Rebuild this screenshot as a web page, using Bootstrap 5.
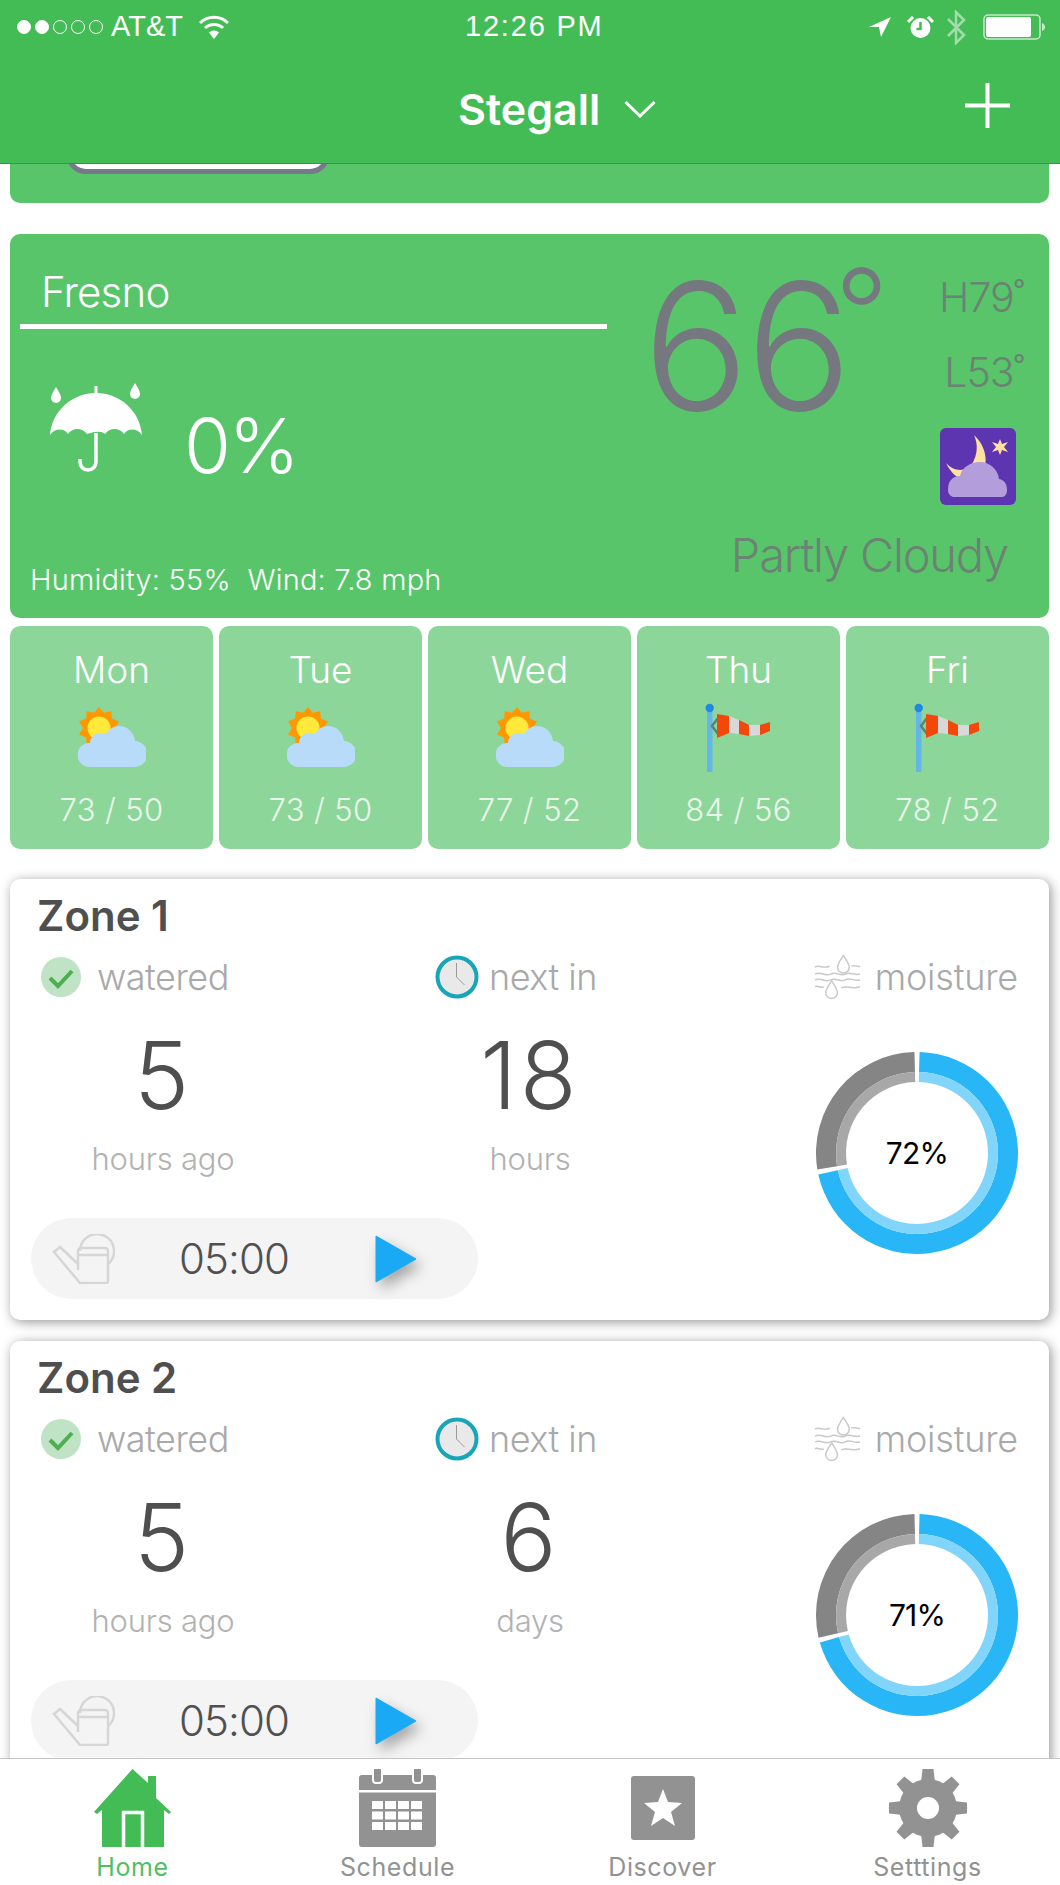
<!DOCTYPE html>
<html lang="en">
<head>
  <meta charset="UTF-8" />
  <title>Stegall</title>
  <link href="https://cdn.jsdelivr.net/npm/bootstrap@5.3.0/dist/css/bootstrap.min.css" rel="stylesheet">
  <style>
    body { margin: 0; background: #fff; font-family: Inter, "Liberation Sans", sans-serif; }
    .phone { width: 1060px; height: 1885px; overflow: hidden; }

    /* header */
    .top-bar { height: 164px; background: #43bc55; border-bottom: 1px solid #2f9a41; color: #fff; flex: none; }
    .status-row { height: 54px; font-family: "Liberation Sans", sans-serif; font-size: 29px; }
    .sig-dot { width: 14px; height: 14px; border-radius: 50%; border: 1.5px solid #fff; margin-right: 4px; }
    .sig-dot.on { background: #fff; }
    .status-left { width: 465px; padding-left: 17px; }
    .status-time { letter-spacing: 1.8px; }
    .bt-ico { margin-left: 12px; }
    .nav-row { height: 109px; padding: 0 50px 0 458px; }
    .stegall { color: #fff; font: 600 43px/50px Inter, sans-serif; }
    .stegall:hover { color: #fff; }
    .plus-ico { margin-top: -7px; }

    /* scrolling part */
    .scroller { padding: 0 11px 0 10px; overflow: hidden; }
    .peek-card { height: 39px; background: #58c56a; border-radius: 0 0 10px 10px; margin-bottom: 31px; padding-left: 56px; }
    .peek-pill { width: 264px; height: 40px; margin-top: -30px; background: #fff; border: 5px solid #77798a; border-radius: 32px; }

    .weather-card { height: 384px; background: #58c56a; border-radius: 10px; margin-bottom: 8px; }
    .weather-left { width: 587px; margin-left: 10px; padding-top: 33px; color: #fff; font-weight: 300; }
    .city { font-size: 42px; line-height: 50px; padding-left: 21px; letter-spacing: -.8px; }
    .city-line { height: 5px; background: #fff; margin-top: 7px; }
    .rain-row { height: 89px; margin-top: 54px; padding-left: 30px; }
    .rain-num { font-size: 76px; line-height: 76px; margin: 24px 0 0 42px; letter-spacing: -2.5px; }
    .humid { font-size: 29px; line-height: 36px; margin-top: 90px; padding-left: 10px; letter-spacing: .2px; }
    .weather-right { margin-left: 45px; padding: 23px 25px 0 0; flex: 1; color: #6b8373; font-weight: 300; }
    .big-temp { font-size: 176px; line-height: 178px; color: #75797f; letter-spacing: -3px; margin-left: -9px; }
    .last-digit { letter-spacing: -17px; }
    .big-deg { font-size: 118px; line-height: 0; vertical-align: 56px; letter-spacing: 0; }
    .hi-lo { padding-top: 18px; font-size: 41px; line-height: 44px; letter-spacing: -1px; }
    .hi-lo div + div { margin-top: 31px; }
    .moon-icon { width: 76px; height: 77px; margin: 34px 8px 0 0; }
    .sky-text { font-size: 47px; line-height: 56px; margin: 22px 16px 0 0; letter-spacing: -1.2px; }

    .day-row { margin-bottom: 30px; gap: 6px; }
    .day-tile { flex: 1 1 0; height: 223px; background: #8dd69a; border-radius: 10px; padding-top: 22px; color: #fff; font-weight: 300; }
    .day-name { font-size: 37px; line-height: 44px; }
    .day-icon { display: block; width: 68px; height: 70px; margin: 11px auto 19px; }
    .day-temp { font-size: 31px; line-height: 36px; letter-spacing: .4px; color: #e9f7eb; }

    /* zones */
    .zone-box { height: 441px; background: #fff; border-radius: 10px; box-shadow: 2px 2px 12px rgba(0,0,0,.42); margin-bottom: 21px; }
    .zone-main { width: 734px; padding-top: 12px; }
    .zone-title { font-size: 42px; line-height: 50px; font-weight: 600; color: #4f4f4f; padding-left: 27px; }
    .zone-cols { margin-top: 12px; }
    .zone-col-a { width: 306px; }
    .zone-col-b { width: 428px; }
    .zone-label { height: 48px; font-size: 36px; font-weight: 300; color: #a9a9a9; letter-spacing: -.5px; }
    .zone-col-a .zone-label { padding-left: 30px; }
    .zone-col-b .zone-label { padding-left: 119px; }
    .zone-val { font-size: 93px; line-height: 90px; margin-top: 29px; color: #4f4f4f; font-weight: 350; letter-spacing: 3px; }
    .zone-sub { font-size: 31px; line-height: 40px; margin-top: 19px; color: #b2b2b2; font-weight: 300; letter-spacing: -.2px; }
    .timer-pill { width: 447px; height: 81px; margin: 39px 0 0 21px; background: #f4f4f4; border-radius: 41px; padding-left: 20px; }
    .timer-text { font-size: 42px; font-weight: 300; color: #505050; margin-left: 64px; width: 107px; letter-spacing: -.9px; }
    .play-icon { margin-left: 89px; filter: drop-shadow(5px 7px 7px rgba(0,0,0,.32)); }
    .zone-side { flex: 1; padding: 74px 31px 0 0; }
    .zone-side .zone-label { letter-spacing: -.2px; }
    .check-ico { margin-right: 15px; }
    .moist-ico { margin-right: 14px; }
    .clock-ico { margin-right: 10px; }
    .donut-wrap { position: relative; width: 202px; height: 202px; margin: 51px 0 0 auto; }
    .donut-num { position: absolute; inset: 0; font-size: 30px; color: #000; font-weight: 400; letter-spacing: -.8px; }

    /* tab bar */
    .tab-bar { height: 127px; flex: none; border-top: 1px solid #c4c4c4; background: #fff; position: relative; }
    .tab-link { padding: 10px 0 0; color: #929292; font-size: 25px; line-height: 30px; letter-spacing: .6px; }
    .tab-link.active-tab { color: #4fbf62; }
    .tab-link svg { display: block; margin: 0 auto 5px; }
  </style>
</head>
<body>

<div class="phone d-flex flex-column">

  <div class="top-bar">
    <div class="status-row d-flex align-items-center">
      <div class="status-left d-flex align-items-center">
        <span class="sig-dot on"></span><span class="sig-dot on"></span><span class="sig-dot"></span><span class="sig-dot"></span><span class="sig-dot"></span>
        <span class="ms-1">AT&amp;T</span>
        <svg class="ms-3" width="30" height="24" viewBox="0 0 30 24"><path d="M1 8a20 20 0 0 1 28 0" fill="none" stroke="#fff" stroke-width="3"/><path d="M6 13a13 13 0 0 1 18 0" fill="none" stroke="#fff" stroke-width="3"/><path d="M10 17.500a7 7 0 0 1 10 0L15 24z" fill="#fff"/></svg>
      </div>
      <span class="status-time">12:26 PM</span>
      <div class="ms-auto d-flex align-items-center">
        <svg width="22" height="20" viewBox="0 0 22 20"><path d="M22 0L0 10h10l2 10z" fill="#fff"/></svg>
        <svg class="ms-3" width="27" height="22" viewBox="0 0 27 22"><circle cx="13.500" cy="12" r="10" fill="#fff"/><path d="M13.500 6v7h-4" stroke="#43bc55" stroke-width="2.500" fill="none"/><path d="M1 6l5-5M26 6l-5-5" stroke="#fff" stroke-width="3"/></svg>
        <svg class="bt-ico" width="20" height="35" viewBox="0 0 20 35" opacity=".5"><path d="M2 9l16 16-8 8V2l8 8L2 26" fill="none" stroke="#fff" stroke-width="2.500"/></svg>
        <svg style="margin:0 14px 0 17px" width="63" height="26" viewBox="0 0 63 26"><rect x="1" y="1" width="56" height="24" rx="4" fill="none" stroke="#fff" stroke-opacity=".7" stroke-width="1.500"/><rect x="3" y="3" width="45" height="20" rx="2" fill="#fff"/><path d="M59 9c2 1 3 2 3 4s-1 3-3 4z" fill="#fff" fill-opacity=".7"/></svg>
      </div>
    </div>
    <div class="navbar nav-row flex-nowrap">
      <div class="navbar-brand stegall m-0 p-0">Stegall</div>
      <svg class="ms-4 me-auto" width="32" height="18" viewBox="0 0 32 18"><path d="M1.500 2L16 16 30.500 2" fill="none" stroke="#fff" stroke-width="3"/></svg>
      <svg class="plus-ico" width="45" height="45" viewBox="0 0 45 45"><path d="M22.500 0v45M0 22.500h45" stroke="#fff" stroke-width="4"/></svg>
    </div>
  </div>

  <div class="scroller flex-grow-1">
    <div class="peek-card d-flex"><div class="peek-pill"></div></div>

    <div class="weather-card d-flex">
      <div class="weather-left">
        <div class="city">Fresno</div>
        <div class="city-line"></div>
        <div class="rain-row d-flex align-items-start">
          <svg width="92" height="89" viewBox="0 0 92 89">
            <path d="M46 3v8" stroke="#fff" stroke-width="3"/>
            <path d="M6 4c3 5 5 8 5 11a5 5 0 0 1-10 0c0-3 2-6 5-11zM85 0c3 5 5 8 5 11a5 5 0 0 1-10 0c0-3 2-6 5-11z" fill="#fff"/>
            <path d="M0 52C2 28 22 10 46 10s44 18 46 42c-5-7-14-7-18-1-4-6-14-7-19 0-3-3-9-3-18 0-5-7-15-6-19 0-4-6-13-6-18 1z" fill="#fff"/>
            <path d="M46 50v29a8 8 0 0 1-16 0v-3" fill="none" stroke="#fff" stroke-width="3.500"/>
          </svg>
          <div class="rain-num">0%</div>
        </div>
        <div class="humid">Humidity: 55% &nbsp;Wind: 7.8 mph</div>
      </div>
      <div class="weather-right d-flex flex-column">
        <div class="d-flex justify-content-between">
          <div class="big-temp">6<span class="last-digit">6</span><span class="big-deg">°</span></div>
          <div class="hi-lo d-flex flex-column align-items-end">
            <div>H79˚</div>
            <div>L53˚</div>
            <svg class="moon-icon" viewBox="0 0 76 77">
              <rect width="76" height="77" rx="6" fill="#5e35b1"/>
              <path d="M34 7C46 18 50 36 40 48 30 58 14 52 6 35c8 9 20 9 26 1 6-10 6-20 2-29z" fill="#ffe0a3"/>
              <path d="M60 11l2 5 6-2-4 5 4 5-6-2-2 5-2-5-6 2 4-5-4-5 6 2z" fill="#ffe0a3"/>
              <path d="M13 69a8 8 0 0 1-5-8c0-7 4-13 12-13 2-9 11-14 20-14s18 7 19 17c6 1 8 6 8 11 0 4-2 7-5 7z" fill="#b39ddb"/>
            </svg>
          </div>
        </div>
        <div class="sky-text text-end">Partly Cloudy</div>
      </div>
    </div>

    <div id="days" class="day-row d-flex"></div>
    <div id="zones"></div>
  </div>

  <nav class="nav nav-justified tab-bar">
    <a class="nav-link tab-link active-tab" href="#">
      <svg width="78" height="78" viewBox="0 0 78 78"><path d="M38.500 0L54 14V7h8v22l15 14-2 2-5-4v37H8V41l-5 4-3-2z" fill="#43bc55"/><path d="M29.500 78V43.500h19V78" fill="none" stroke="#fff" stroke-width="3.500"/></svg>
      Home
    </a>
    <a class="nav-link tab-link" href="#">
      <svg width="78" height="78" viewBox="0 0 78 78"><rect y="6" width="77" height="72" rx="3" fill="#929292"/><rect y="21" width="77" height="2.500" fill="#fff"/><g fill="#929292" stroke="#fff" stroke-width="2"><rect x="14" y="-2" width="9" height="16" rx="3"/><rect x="54" y="-2" width="9" height="16" rx="3"/></g><path d="M13 36h51M13 46.500h51M13 57h51" stroke="#fff" stroke-width="8" stroke-dasharray="11 2"/></svg>
      Schedule
    </a>
    <a class="nav-link tab-link" href="#">
      <svg width="78" height="78" viewBox="0 0 78 78"><rect x="7" y="7" width="64" height="64" rx="3" fill="#929292"/><path d="M39 20l5 13 14 1-11 9 4 14-12-8-12 8 4-14-11-9 14-1z" fill="#fff"/></svg>
      Discover
    </a>
    <a class="nav-link tab-link" href="#">
      <svg width="78" height="78" viewBox="0 0 78 78" id="gear"><circle cx="39" cy="39" r="29" fill="#929292"/><circle cx="39" cy="39" r="11" fill="#fff"/></svg>
      Setttings
    </a>
  </nav>
</div>

<script src="https://cdn.jsdelivr.net/npm/bootstrap@5.3.0/dist/js/bootstrap.bundle.min.js"></script>
<script>
// spiky sun outline, 10 points round the sun centre
function sunPoints(cx, cy, outer, inner) {
  const pts = [];
  for (let i = 0; i < 20; i++) {
    const r = i % 2 ? inner : outer;
    const a = i / 20 * 2 * Math.PI;
    pts.push(`${(cx + r * Math.sin(a)).toFixed(1)},${(cy - r * Math.cos(a)).toFixed(1)}`);
  }
  return pts.join(" ");
}

const sunIcon = `<svg class="day-icon" viewBox="0 0 68 70">
  <polygon points="${sunPoints(21, 25, 21, 16)}" fill="#ff9800"/>
  <circle cx="21" cy="25" r="11.500" fill="#ffe93b"/>
  <path d="M12 64a12 12 0 0 1-1-24h1c0-6 5-10 10-10 2 0 4 1 6 1 2-5 8-8 13-8 8 0 15 6 16 15h0a13 13 0 0 1-1 26z" fill="#b7dbf9"/>
</svg>`;

const windIcon = `<svg class="day-icon" viewBox="0 0 68 70">
  <rect x="2" y="5" width="5.500" height="64" fill="#64b5e8"/>
  <circle cx="4.700" cy="5" r="4.200" fill="#1e88e5"/>
  <path d="M13 15l-6 8 6 8" fill="none" stroke="#5f8272" stroke-width="2.500"/>
  <path d="M12 11l12 2v17l-12 5z" fill="#f4470a"/>
  <path d="M24 13l10 4v14l-10-1z" fill="#d8d8d8"/>
  <path d="M34 17l10 5v11l-10-2z" fill="#f4470a"/>
  <path d="M44 22h11v10l-11 1z" fill="#d8d8d8"/>
  <path d="M55 22l10-3v9l-10 4z" fill="#f4470a"/>
</svg>`;

const forecast = [
  { day: "Mon", icon: sunIcon, temp: "73 / 50" },
  { day: "Tue", icon: sunIcon, temp: "73 / 50" },
  { day: "Wed", icon: sunIcon, temp: "77 / 52" },
  { day: "Thu", icon: windIcon, temp: "84 / 56" },
  { day: "Fri", icon: windIcon, temp: "78 / 52" }
];

document.getElementById("days").innerHTML = forecast.map(d => `
  <div class="day-tile text-center">
    <div class="day-name">${d.day}</div>
    ${d.icon}
    <div class="day-temp">${d.temp}</div>
  </div>`).join("");

// one ring (dark outer band + light inner band) for an arc in percent
function ringArc(from, to, outer, inner) {
  const pt = (r, p) => {
    const a = p / 100 * 2 * Math.PI;
    return `${(101 + r * Math.sin(a)).toFixed(2)} ${(101 - r * Math.cos(a)).toFixed(2)}`;
  };
  const big = to - from > 50 ? 1 : 0;
  return `M${pt(outer, from)}A${outer} ${outer} 0 ${big} 1 ${pt(outer, to)}L${pt(inner, to)}A${inner} ${inner} 0 ${big} 0 ${pt(inner, from)}Z`;
}

function donut(pct) {
  const gap = 0.4;
  return `<svg width="202" height="202" viewBox="0 0 202 202">
    <path d="${ringArc(gap, pct - gap, 101, 81)}" fill="#29b6f6"/>
    <path d="${ringArc(gap, pct - gap, 81, 71)}" fill="#81d4fa"/>
    <path d="${ringArc(pct + gap, 100 - gap, 101, 81)}" fill="#858585"/>
    <path d="${ringArc(pct + gap, 100 - gap, 81, 71)}" fill="#a8a8a8"/>
  </svg>`;
}

const canIcon = `<svg width="64" height="50" viewBox="0 0 64 50" fill="none" stroke="#d6d6d6" stroke-width="2.500">
  <path d="M29 17a17 17 0 1 1 28 13"/>
  <path d="M27 36V17a3 3 0 0 1 3-3h24a3 3 0 0 1 3 3v30a2 2 0 0 1-2 2H29L3 18l6-5 18 17"/>
  <path d="M27 21h30"/>
</svg>`;

const checkIcon = `<svg class="check-ico" width="42" height="42" viewBox="0 0 42 42"><circle cx="21" cy="21" r="20" fill="#bfe3c4"/><path d="M10 22l8 8 14-15" fill="none" stroke="#4caf50" stroke-width="4"/></svg>`;
const clockIcon = `<svg class="clock-ico" width="44" height="44" viewBox="0 0 44 44"><circle cx="22" cy="22" r="19.500" fill="#e9e9e9" stroke="#17a5b8" stroke-width="4"/><path d="M21.500 8v14l8 8" fill="none" stroke="#9a9a9a" stroke-width="1"/></svg>`;
const moistureIcon = `<svg class="moist-ico" width="47" height="48" viewBox="0 0 48 48" fill="none" stroke="#c9c9c9" stroke-width="1.500">
  <path d="M30 2c4 6 6 9 6 12a6 6 0 0 1-12 0c0-3 2-6 6-12zM18 28c4 6 6 9 6 12a6 6 0 0 1-12 0c0-3 2-6 6-12z"/>
  <path d="M1 14c4-3 8 2 15-1M38 13c3-2 6 1 9 0M1 21c6-3 10 3 16 0s10 3 15 0 9 2 15 0M1 27c6-3 10 3 16 0s10 3 15 0 9 2 15 0M1 34c3-2 6 2 9 0M28 35c6-3 10 2 19-1"/>
</svg>`;

const zoneData = [
  { name: "Zone 1", next: "18", unit: "hours", moisture: 72 },
  { name: "Zone 2", next: "6", unit: "days", moisture: 71 }
];

document.getElementById("zones").innerHTML = zoneData.map(z => `
  <div class="zone-box d-flex">
    <div class="zone-main">
      <div class="zone-title">${z.name}</div>
      <div class="zone-cols d-flex text-center">
        <div class="zone-col-a">
          <div class="zone-label d-flex align-items-center">${checkIcon}watered</div>
          <div class="zone-val">5</div>
          <div class="zone-sub">hours ago</div>
        </div>
        <div class="zone-col-b">
          <div class="zone-label d-flex align-items-center">${clockIcon}next in</div>
          <div class="zone-val">${z.next}</div>
          <div class="zone-sub">${z.unit}</div>
        </div>
      </div>
      <div class="timer-pill d-flex align-items-center">
        ${canIcon}
        <div class="timer-text">05:00</div>
        <svg class="play-icon" width="42" height="48" viewBox="0 0 42 48"><path d="M1 1l40 23L1 47z" fill="#1aa9f5" stroke="#1aa9f5" stroke-linejoin="round"/></svg>
      </div>
    </div>
    <div class="zone-side">
      <div class="zone-label d-flex align-items-center justify-content-end">${moistureIcon}moisture</div>
      <div class="donut-wrap">
        ${donut(z.moisture)}
        <div class="donut-num d-flex align-items-center justify-content-center">${z.moisture}%</div>
      </div>
    </div>
  </div>`).join("");

// gear teeth
const gear = document.getElementById("gear");
let teeth = "";
for (let i = 0; i < 8; i++) {
  teeth += `<path d="M32 14L33.500 0h11L46 14z" fill="#929292" transform="rotate(${i * 45} 39 39)"/>`;
}
gear.innerHTML = teeth + gear.innerHTML;
</script>

</body>
</html>
